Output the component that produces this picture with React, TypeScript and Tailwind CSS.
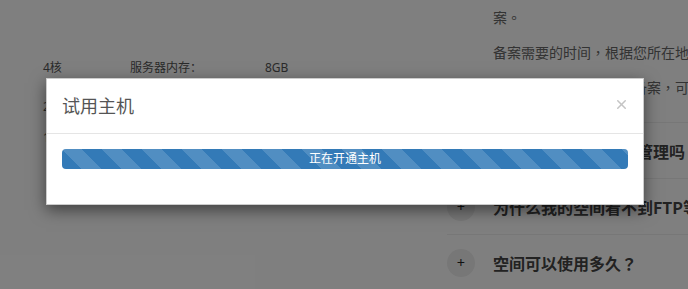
import { X } from 'lucide-react';

const font = "font-['Noto_Sans','Noto_Sans_CJK_SC',sans-serif]";
const fontTc = "font-['Noto_Sans_CJK_TC','Noto_Sans_CJK_SC',sans-serif]";

const specs = [
  ['4核', '服务器内存：', '8GB'],
  ['2M', '硬盘空间：', '100GB'],
  ['1个', '数据库：', '1个'],
];

const questions = ['可以对主机进行远程管理吗', '为什么我的空间看不到FTP等文件？', '空间可以使用多久？'];

export default function App() {
  return (
    <div className={`relative w-[688px] h-[289px] overflow-hidden bg-white ${font}`}>
      {/* page behind the modal */}
      <div className="flex h-full">
        <div className="w-[447px] pl-[43px] pt-[58px] text-[12px] text-[#555]">
          {specs.map((row, i) => (
            <div
              key={i}
              className={`flex h-5 leading-5 ${i === 1 ? 'mt-[19px]' : i === 2 ? 'mt-[11px]' : ''}`}
            >
              <span className="w-[87px]">{row[0]}</span>
              <span className="w-[135px]">{row[1]}</span>
              <span>{row[2]}</span>
            </div>
          ))}
        </div>

        <div lang="zh-Hant" className={`flex-1 min-w-0 overflow-hidden ${fontTc}`}>
          <div className="pl-[46px] text-[14px] leading-[35px] text-[#666] whitespace-nowrap">
            <p>案。</p>
            <p>备案需要的时间，根据您所在地区管局的审核速度而定</p>
            <p>如果您的网站没有进行备案，可以先使用临时域名</p>
          </div>
          <div className="mt-[17px]">
            {questions.map((q) => (
              <div key={q} className="flex items-center h-[56px] border-t border-[#eee] whitespace-nowrap">
                <div className="w-7 h-7 shrink-0 rounded-full bg-[#eee] flex items-center justify-center text-[14px] text-[#222]">
                  +
                </div>
                <span className="ml-[18px] text-[16px] font-bold text-[#444]">{q}</span>
              </div>
            ))}
          </div>
        </div>
      </div>

      {/* backdrop */}
      <div className="absolute inset-0 bg-black/50" />

      {/* modal */}
      <div className="absolute left-[46px] top-[78px] w-[598px] bg-white border border-black/20 shadow-[0_5px_15px_rgba(0,0,0,0.5)]">
        <div className="flex items-center justify-between pl-[15px] pr-[14px] h-[55px] border-b border-[#e5e5e5]">
          <h4 className="text-[18px] leading-[26px] text-[#555]">试用主机</h4>
          <button className="text-[#c4c4c4] -mt-[3px]">
            <X className="w-[15px] h-[15px]" strokeWidth={2.4} />
          </button>
        </div>
        <div className="p-[15px]">
          <div className="h-5 mb-5 rounded-[4px] overflow-hidden bg-[#f5f5f5]">
            <div className="h-full w-full bg-[#337ab7] bg-[linear-gradient(45deg,rgba(255,255,255,.15)_25%,transparent_25%,transparent_50%,rgba(255,255,255,.15)_50%,rgba(255,255,255,.15)_75%,transparent_75%,transparent)] bg-size-[40px_40px] text-center text-[12px] leading-5 text-white">
              正在开通主机
            </div>
          </div>
        </div>
      </div>
    </div>
  );
}
